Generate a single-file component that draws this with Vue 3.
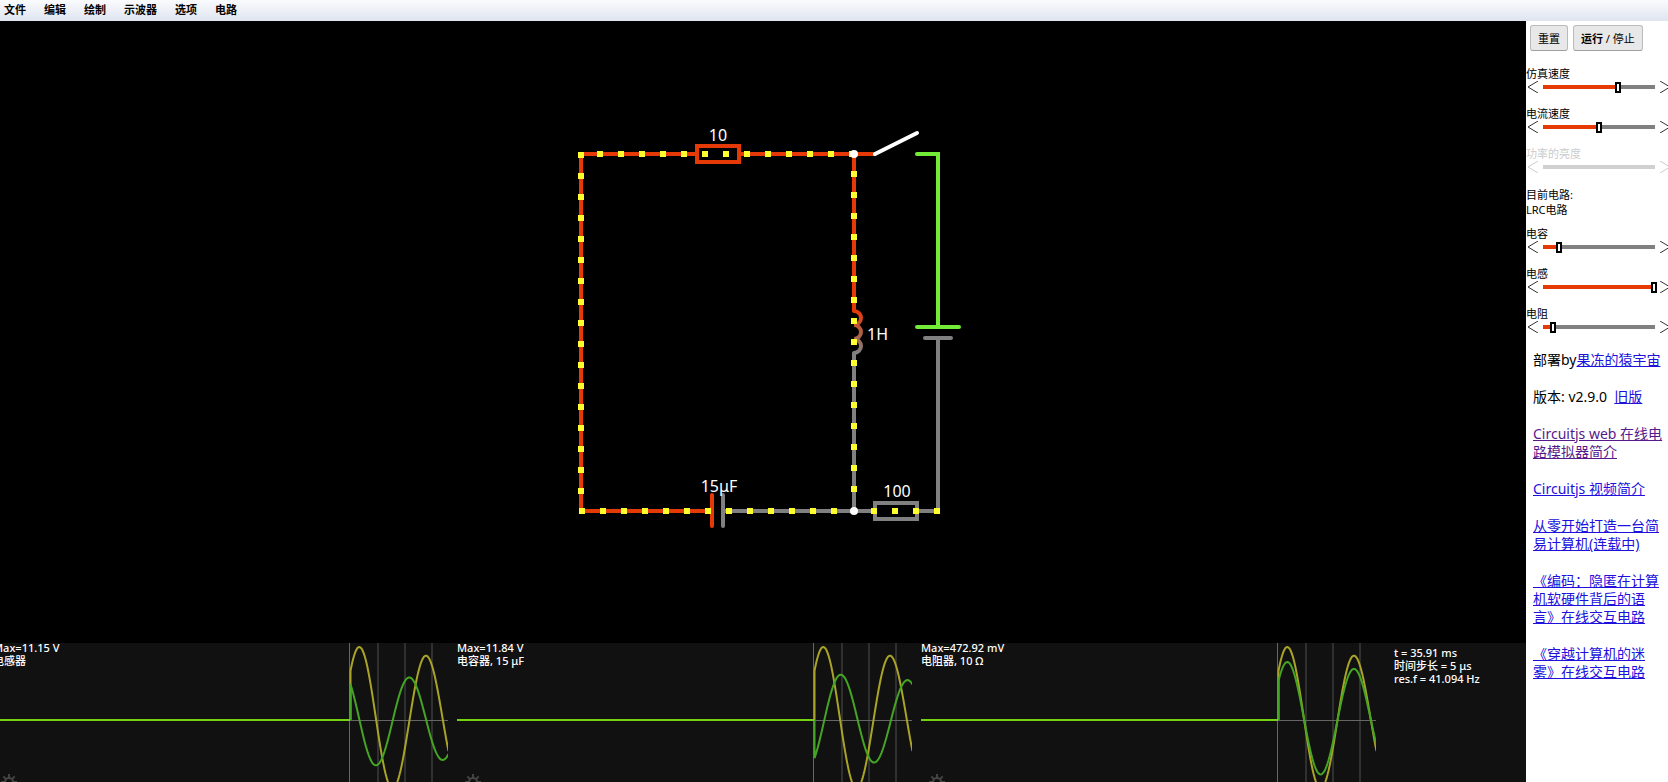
<script setup>
import { reactive } from 'vue'

const menus = ['文件', '编辑', '绘制', '示波器', '选项', '电路']

const speedSliders = reactive([
  { id: 'sim', label: '仿真速度', value: 67, disabled: false },
  { id: 'current', label: '电流速度', value: 50, disabled: false },
  { id: 'power', label: '功率的亮度', value: 50, disabled: true },
])
const valueSliders = reactive([
  { id: 'cap', label: '电容', value: 14, disabled: false },
  { id: 'ind', label: '电感', value: 99, disabled: false },
  { id: 'res', label: '电阻', value: 9, disabled: false },
])
const groups = [speedSliders, valueSliders]

const range = (start, count) => Array.from({ length: count }, (_, i) => start + i * 21)
const dots = [
  ...range(600, 13).map((x) => ({ x, y: 133 })),
  ...range(134, 17).map((y) => ({ x: 581, y })),
  ...range(582, 13).map((x) => ({ x, y: 490 })),
  ...range(874, 4).map((x) => ({ x, y: 490 })),
  ...range(153, 16).map((y) => ({ x: 854, y })),
]

const START = 357
const END = 455
const ZERO = 77
const PERIOD = 66.7
// Damped oscillation: amplitude is given at the peak position.
function wave(peak, amp) {
  const pts = [`M${START}.5 ${ZERO}`]
  for (let x = START; x <= END; x += 1) {
    const v = amp * Math.exp(-0.0019 * (x - peak)) * Math.cos((2 * Math.PI * (x - peak)) / PERIOD)
    pts.push(`L${x}.5 ${(ZERO - v).toFixed(2)}`)
  }
  return pts.join('')
}
const current = wave(366, 73)
const scopes = [
  { max: 'Max=11.15 V', name: '电感器', voltage: wave(416, 42.6) },
  { max: 'Max=11.84 V', name: '电容器, 15 μF', voltage: wave(383.5, 45.3) },
  { max: 'Max=472.92 mV', name: '电阻器, 10 Ω', voltage: wave(366, 58) },
]
const teeth = [0, 45, 90, 135, 180, 225, 270, 315]
</script>

<template>
  <div class="app">
    <nav class="menubar">
      <button v-for="m in menus" :key="m" type="button">{{ m }}</button>
    </nav>
    <div class="body">
      <main class="work">
        <svg class="circuit" viewBox="0 0 1526 622" preserveAspectRatio="xMidYMid meet">
          <defs>
            <linearGradient id="coil" gradientUnits="userSpaceOnUse" x1="0" y1="290" x2="0" y2="332">
              <stop offset="0" stop-color="#e63a06" />
              <stop offset="1" stop-color="#808080" />
            </linearGradient>
          </defs>
          <g class="wire red">
            <path d="M697 133H581V490H712M739 133H875M854 133V290" />
            <rect x="697" y="125" width="42" height="16" />
            <path d="M712 474V505" />
          </g>
          <g class="wire gray">
            <path d="M723 490H875M854 332V490M917 490H938V317M925 317H951M723 474V505" />
            <rect x="875" y="482" width="42" height="16" />
          </g>
          <path class="wire green" d="M917 133H938V306M917 306H959" />
          <path class="coil" d="M854 290A7 7 0 1 1 854 304A7 7 0 1 1 854 318A7 7 0 1 1 854 332" />
          <path class="wire white" d="M875 133L917 112" />
          <rect v-for="(d, i) in dots" :key="i" class="dot" :x="d.x - 3" :y="d.y - 3" width="6" height="6" />
          <circle class="node" cx="854" cy="133" r="4" />
          <circle class="node" cx="854" cy="490" r="4" />
          <text x="718" y="120" text-anchor="middle">10</text>
          <text x="867" y="319">1H</text>
          <text x="719" y="471" text-anchor="middle">15μF</text>
          <text x="897" y="476" text-anchor="middle">100</text>
        </svg>
        <section class="scopes">
          <div v-for="s in scopes" :key="s.name" class="scope">
            <svg class="plot" viewBox="0 0 455 139" preserveAspectRatio="none">
              <path class="grid" d="M385 0V139M412 0V139M439 0V139" />
              <path class="axis" d="M356.5 0V139M0 77.5H455" />
              <path class="current" :d="current" />
              <path class="voltage" :d="s.voltage" />
              <path class="flat" d="M0 77H357" />
            </svg>
            <p class="legend">{{ s.max }}<br />{{ s.name }}</p>
            <svg class="gear" viewBox="-9 -9 18 18">
              <circle r="4" />
              <path v-for="t in teeth" :key="t" d="M0 -4V-8" :transform="`rotate(${t})`" />
            </svg>
          </div>
          <p class="info">t = 35.91 ms<br />时间步长 = 5 μs<br />res.f = 41.094 Hz</p>
        </section>
      </main>
      <aside class="side">
        <div class="buttons">
          <button type="button">重置</button>
          <button type="button"><b>运行</b> / 停止</button>
        </div>
        <template v-for="(group, g) in groups" :key="g">
          <p v-if="g === 1" class="now">目前电路:<br />LRC电路</p>
          <div v-for="s in group" :key="s.id" class="slider" :class="{ off: s.disabled }">
            <label :for="s.id">{{ s.label }}</label>
            <div class="row">
              <svg class="arrow" viewBox="0 0 11 12"><path d="M11 0L1 6L11 12" /></svg>
              <div class="track" :style="{ '--fill': s.value + '%' }">
                <input :id="s.id" v-model="s.value" type="range" min="0" max="100" :disabled="s.disabled" />
              </div>
              <svg class="arrow" viewBox="0 0 11 12"><path d="M0 0L10 6L0 12" /></svg>
            </div>
          </div>
        </template>
        <div class="links">
          <p>部署by<a href="#">果冻的猿宇宙</a></p>
          <p>版本: v2.9.0 &nbsp;<a href="#">旧版</a></p>
          <p><a href="#" class="seen">Circuitjs web 在线电路模拟器简介</a></p>
          <p><a href="#">Circuitjs 视频简介</a></p>
          <p><a href="#">从零开始打造一台简易计算机(连载中)</a></p>
          <p><a href="#">《编码：隐匿在计算机软硬件背后的语言》在线交互电路</a></p>
          <p><a href="#">《穿越计算机的迷雾》在线交互电路</a></p>
        </div>
      </aside>
    </div>
  </div>
</template>

<style>
body {
  margin: 0;
}
</style>

<style scoped>
.app {
  height: 100vh;
  display: flex;
  flex-direction: column;
  overflow: hidden;
  background: #fff;
  color: #000;
  font-family: "Noto Sans", "Noto Sans CJK SC", sans-serif;
  font-size: 11px;
}
p {
  margin: 0;
}
button {
  font: inherit;
  color: inherit;
}
.menubar {
  display: flex;
  gap: 18px;
  height: 21px;
  padding: 0 4px;
  background: linear-gradient(#fafbfd, #dfe4f0);
}
.menubar button {
  padding: 0 0 2px;
  border: 0;
  background: none;
  font-weight: bold;
  line-height: 19px;
}
.body {
  flex: 1;
  min-height: 0;
  display: flex;
}
.work {
  flex: 1;
  min-width: 0;
  display: flex;
  flex-direction: column;
  background: #000;
  overflow: hidden;
}
.circuit {
  flex: 1;
  min-height: 0;
  width: 100%;
}
.wire {
  fill: none;
  stroke-width: 4;
  stroke-linecap: round;
}
.red {
  stroke: #e63a06;
}
.gray {
  stroke: #808080;
}
.green {
  stroke: #73ec38;
}
.white {
  stroke: #fff;
}
.coil {
  fill: none;
  stroke: url(#coil);
  stroke-width: 4;
}
.dot {
  fill: #ffff30;
}
.node {
  fill: #fff;
}
.circuit text {
  fill: #fff;
  font-size: 16px;
}
.scopes {
  flex: none;
  display: grid;
  grid-template-columns: 455fr 455fr 455fr 141fr;
  column-gap: 9px;
  height: 139px;
  margin-left: -7px;
  background: #111;
  color: #fff;
  font-weight: 500;
  line-height: 13px;
}
.scope {
  position: relative;
  min-width: 0;
}
.plot {
  display: block;
  width: 100%;
  height: 139px;
}
.plot path {
  fill: none;
  stroke-width: 1;
  vector-effect: non-scaling-stroke;
}
.plot .grid {
  stroke: #303030;
  stroke-width: 2;
}
.plot .axis {
  stroke: #666;
}
.plot .current {
  stroke: #a9a428;
  stroke-width: 2;
}
.plot .voltage {
  stroke: #45a523;
  stroke-width: 2;
}
.plot .flat {
  stroke: #74d310;
  stroke-width: 2;
}
.legend {
  position: absolute;
  top: -2px;
  left: 0;
}
.gear {
  position: absolute;
  left: 7px;
  bottom: -9px;
  width: 18px;
  height: 18px;
  fill: none;
  stroke: #444;
  stroke-width: 2;
}
.info {
  padding: 3px 0 0 9px;
  white-space: nowrap;
}
.side {
  flex: none;
  width: 142px;
  overflow: hidden;
}
.buttons {
  display: flex;
  gap: 5px;
  padding: 4px 4px 0;
  margin-bottom: 16px;
}
.buttons button {
  height: 26px;
  padding: 0 7px;
  border: 1px solid #bbb;
  border-bottom-color: #a0a0a0;
  border-radius: 3px;
  background: #e8e8e8;
  white-space: nowrap;
}
.slider label {
  display: block;
  height: 14px;
  line-height: 13px;
}
.slider {
  height: 40px;
}
.row {
  display: flex;
  align-items: center;
  gap: 5px;
  width: 144px;
  height: 12px;
  padding-left: 1px;
}
.arrow {
  flex: none;
  width: 11px;
  height: 12px;
  fill: none;
  stroke: #333;
  stroke-width: 1;
}
.track {
  flex: 1;
  height: 4px;
  background: linear-gradient(to right, #e63a06 var(--fill), #808080 var(--fill));
}
.track input {
  display: block;
  appearance: none;
  width: calc(100% + 6px);
  height: 12px;
  margin: -4px -3px;
  background: transparent;
}
.track input::-webkit-slider-thumb {
  appearance: none;
  box-sizing: border-box;
  width: 6px;
  height: 11px;
  border: 2px solid #000;
  border-radius: 0;
  background: #fff;
}
.off {
  color: #ccc;
}
.off .arrow {
  stroke: #ccc;
}
.off .track {
  background: #d0d0d0;
}
.off input::-webkit-slider-thumb {
  visibility: hidden;
}
.now {
  line-height: 15px;
  height: 40px;
}
.links {
  display: flex;
  flex-direction: column;
  gap: 19px;
  padding: 4px 2px 0 7px;
  font-size: 14px;
  line-height: 18px;
  text-spacing-trim: space-all;
}
.links a {
  color: #2010dd;
}
.links .seen {
  color: #551a8b;
}
</style>
